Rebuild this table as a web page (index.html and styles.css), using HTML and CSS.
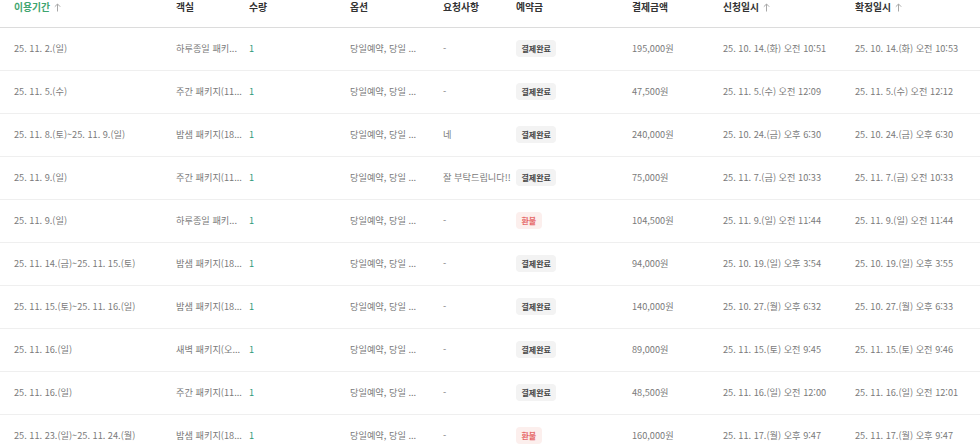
FILE: index.html
```html
<!DOCTYPE html>
<html lang="ko">
<head>
<meta charset="utf-8">
<link rel="stylesheet" href="styles.css">
</head>
<body>
<table class="grid">
  <colgroup>
    <col class="c-period"><col class="c-room"><col class="c-qty"><col class="c-opt"><col class="c-req"><col class="c-dep"><col class="c-pay"><col class="c-apply"><col class="c-confirm">
  </colgroup>
  <thead>
    <tr>
      <th class="active">이용기간 <svg class="arrow" width="7" height="9" viewBox="0 0 7 9"><path d="M3.5 8.5V1M0.8 3.7L3.5 1L6.2 3.7" fill="none" stroke="#a8a8a8" stroke-width="1"/></svg></th>
      <th>객실</th>
      <th>수량</th>
      <th>옵션</th>
      <th>요청사항</th>
      <th>예약금</th>
      <th>결제금액</th>
      <th>신청일시 <svg class="arrow" width="7" height="9" viewBox="0 0 7 9"><path d="M3.5 8.5V1M0.8 3.7L3.5 1L6.2 3.7" fill="none" stroke="#a8a8a8" stroke-width="1"/></svg></th>
      <th>확정일시 <svg class="arrow" width="7" height="9" viewBox="0 0 7 9"><path d="M3.5 8.5V1M0.8 3.7L3.5 1L6.2 3.7" fill="none" stroke="#a8a8a8" stroke-width="1"/></svg></th>
    </tr>
  </thead>
  <tbody>
    <tr><td>25. 11. 2.(일)</td><td>하루종일 패키...</td><td class="qty">1</td><td>당일예약, 당일 ...</td><td>-</td><td><span class="badge paid">결제완료</span></td><td>195,000원</td><td>25. 10. 14.(화) 오전 10:51</td><td>25. 10. 14.(화) 오전 10:53</td></tr>
    <tr><td>25. 11. 5.(수)</td><td>주간 패키지(11...</td><td class="qty">1</td><td>당일예약, 당일 ...</td><td>-</td><td><span class="badge paid">결제완료</span></td><td>47,500원</td><td>25. 11. 5.(수) 오전 12:09</td><td>25. 11. 5.(수) 오전 12:12</td></tr>
    <tr><td>25. 11. 8.(토)~25. 11. 9.(일)</td><td>밤샘 패키지(18...</td><td class="qty">1</td><td>당일예약, 당일 ...</td><td>네</td><td><span class="badge paid">결제완료</span></td><td>240,000원</td><td>25. 10. 24.(금) 오후 6:30</td><td>25. 10. 24.(금) 오후 6:30</td></tr>
    <tr><td>25. 11. 9.(일)</td><td>주간 패키지(11...</td><td class="qty">1</td><td>당일예약, 당일 ...</td><td>잘 부탁드립니다!!</td><td><span class="badge paid">결제완료</span></td><td>75,000원</td><td>25. 11. 7.(금) 오전 10:33</td><td>25. 11. 7.(금) 오전 10:33</td></tr>
    <tr><td>25. 11. 9.(일)</td><td>하루종일 패키...</td><td class="qty">1</td><td>당일예약, 당일 ...</td><td>-</td><td><span class="badge refund">환불</span></td><td>104,500원</td><td>25. 11. 9.(일) 오전 11:44</td><td>25. 11. 9.(일) 오전 11:44</td></tr>
    <tr><td>25. 11. 14.(금)~25. 11. 15.(토)</td><td>밤샘 패키지(18...</td><td class="qty">1</td><td>당일예약, 당일 ...</td><td>-</td><td><span class="badge paid">결제완료</span></td><td>94,000원</td><td>25. 10. 19.(일) 오후 3:54</td><td>25. 10. 19.(일) 오후 3:55</td></tr>
    <tr><td>25. 11. 15.(토)~25. 11. 16.(일)</td><td>밤샘 패키지(18...</td><td class="qty">1</td><td>당일예약, 당일 ...</td><td>-</td><td><span class="badge paid">결제완료</span></td><td>140,000원</td><td>25. 10. 27.(월) 오후 6:32</td><td>25. 10. 27.(월) 오후 6:33</td></tr>
    <tr><td>25. 11. 16.(일)</td><td>새벽 패키지(오...</td><td class="qty">1</td><td>당일예약, 당일 ...</td><td>-</td><td><span class="badge paid">결제완료</span></td><td>89,000원</td><td>25. 11. 15.(토) 오전 9:45</td><td>25. 11. 15.(토) 오전 9:46</td></tr>
    <tr><td>25. 11. 16.(일)</td><td>주간 패키지(11...</td><td class="qty">1</td><td>당일예약, 당일 ...</td><td>-</td><td><span class="badge paid">결제완료</span></td><td>48,500원</td><td>25. 11. 16.(일) 오전 12:00</td><td>25. 11. 16.(일) 오전 12:01</td></tr>
    <tr><td>25. 11. 23.(일)~25. 11. 24.(월)</td><td>밤샘 패키지(18...</td><td class="qty">1</td><td>당일예약, 당일 ...</td><td>-</td><td><span class="badge refund">환불</span></td><td>160,000원</td><td>25. 11. 17.(월) 오후 9:47</td><td>25. 11. 17.(월) 오후 9:47</td></tr>
  </tbody>
</table>
</body>
</html>
```
FILE: styles.css
```css
html, body {
  margin: 0;
  padding: 0;
  background: #ffffff;
}
body {
  font-family: "Noto Sans CJK KR", "Noto Sans", sans-serif;
  overflow: hidden;
}
.grid {
  width: 980px;
  border-collapse: collapse;
  table-layout: fixed;
}
.c-period { width: 162px; }
.c-room { width: 73px; }
.c-qty { width: 101px; }
.c-opt { width: 93px; }
.c-req { width: 73px; }
.c-dep { width: 116px; }
.c-pay { width: 91px; }
.c-apply { width: 132px; }
.c-confirm { width: 139px; }

.grid th {
  text-align: left;
  font-size: 9.8px;
  font-weight: 700;
  color: #333333;
  height: 27px;
  padding: 1px 0 0 14px;
  vertical-align: top;
  line-height: 12px;
  border-bottom: 1px solid #dcdcdc;
  white-space: nowrap;
  box-sizing: border-box;
}
.grid th.active { color: #3fa56f; }
.arrow {
  display: inline-block;
  vertical-align: -1px;
  margin-left: 1px;
}
.grid td {
  height: 43px;
  padding: 0 0 1px 14px;
  font-size: 9.2px;
  line-height: 13px;
  color: #7a7a7a;
  vertical-align: middle;
  border-bottom: 1px solid #efefef;
  white-space: nowrap;
  box-sizing: border-box;
}
.grid td.qty { color: #2f9a7a; }
.badge {
  display: inline-block;
  vertical-align: middle;
  font-size: 8px;
  font-weight: 700;
  line-height: 17px;
  padding: 0 5.5px;
  border-radius: 4px;
}
.badge.paid {
  background: #f3f3f3;
  color: #444444;
}
.badge.refund {
  background: #fcefed;
  color: #e66a6a;
}
```
